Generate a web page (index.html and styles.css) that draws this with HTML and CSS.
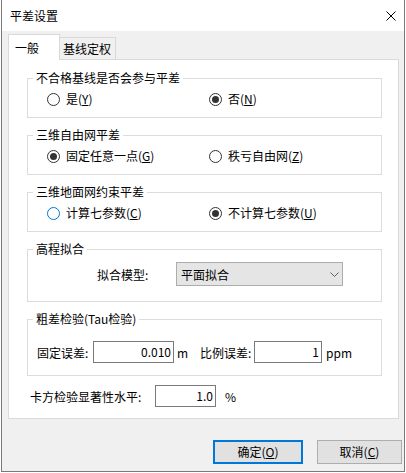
FILE: index.html
```html
<!DOCTYPE html>
<html lang="zh-CN">
<head>
<meta charset="utf-8">
<title>平差设置</title>
<link rel="stylesheet" href="styles.css">
</head>
<body>
<div class="window">
  <div class="titlebar">
    <span class="title">平差设置</span>
    <svg class="close" width="10" height="10" viewBox="0 0 10 10"><path d="M0.5 0.5 L9.5 9.5 M9.5 0.5 L0.5 9.5" stroke="#000" stroke-width="1" fill="none"/></svg>
  </div>
  <div class="client">
    <div class="tabs">
      <div class="tab active">一般</div>
      <div class="tab">基线定权</div>
    </div>
    <div class="panel">
      <fieldset class="group">
        <legend>不合格基线是否会参与平差</legend>
        <div class="opts">
          <label class="radio"><span class="mark"></span><span>是(<u>Y</u>)</span></label>
          <label class="radio"><span class="mark on"></span><span>否(<u>N</u>)</span></label>
        </div>
      </fieldset>
      <fieldset class="group">
        <legend>三维自由网平差</legend>
        <div class="opts">
          <label class="radio"><span class="mark on"></span><span>固定任意一点(<u>G</u>)</span></label>
          <label class="radio"><span class="mark"></span><span>秩亏自由网(<u>Z</u>)</span></label>
        </div>
      </fieldset>
      <fieldset class="group">
        <legend>三维地面网约束平差</legend>
        <div class="opts">
          <label class="radio"><span class="mark hover"></span><span>计算七参数(<u>C</u>)</span></label>
          <label class="radio"><span class="mark on"></span><span>不计算七参数(<u>U</u>)</span></label>
        </div>
      </fieldset>
      <fieldset class="group group-fit">
        <legend>高程拟合</legend>
        <div class="fit-row">
          <span class="fit-label">拟合模型:</span>
          <div class="combo">
            <span>平面拟合</span>
            <svg width="9" height="5" viewBox="0 0 9 5"><path d="M0.5 0.5 L4.5 4.5 L8.5 0.5" stroke="#606060" stroke-width="1" fill="none"/></svg>
          </div>
        </div>
      </fieldset>
      <fieldset class="group group-tau">
        <legend>粗差检验(Tau检验)</legend>
        <div class="tau-row">
          <span class="lbl-fixed">固定误差:</span>
          <span class="field field-fixed">0.010</span>
          <span class="unit-m">m</span>
          <span class="lbl-ratio">比例误差:</span>
          <span class="field field-ratio">1</span>
          <span class="unit-ppm">ppm</span>
        </div>
      </fieldset>
      <div class="chi-row">
        <span class="lbl-chi">卡方检验显著性水平:</span>
        <span class="field field-chi">1.0</span>
        <span class="unit-pct">%</span>
      </div>
    </div>
    <div class="buttons">
      <button class="btn btn-default">确定(<u>O</u>)</button>
      <button class="btn btn-cancel">取消(<u>C</u>)</button>
    </div>
  </div>
</div>
</body>
</html>
```

FILE: styles.css
```css
html, body {
  margin: 0;
  padding: 0;
  background: #ffffff;
}

body {
  font-family: "Noto Sans CJK SC", "Noto Sans", sans-serif;
  font-size: 12px;
  color: #000;
}

.window {
  margin-left: 1px;
  width: 404px;
  height: 472px;
  box-sizing: border-box;
  border: 1px solid #7a7a7a;
  border-top: none;
  display: flex;
  flex-direction: column;
}

.titlebar {
  height: 31px;
  flex: none;
  background: #ffffff;
  display: flex;
  align-items: center;
  justify-content: space-between;
  padding: 0 8px;
}

.title {
  line-height: 16px;
}

.close {
  display: block;
}

.client {
  flex: 1;
  background: #f0f0f0;
  padding: 3px 0 0 6px;
}

.tabs {
  display: flex;
  height: 25px;
  align-items: flex-start;
}

.tab {
  box-sizing: border-box;
  margin-top: 3px;
  height: 22px;
  width: 56px;
  border-top: 1px solid #d9d9d9;
  border-right: 1px solid #d9d9d9;
  padding-left: 3px;
  line-height: 21px;
  background: #f0f0f0;
}

.tab.active {
  margin-top: 0;
  height: 26px;
  width: 52px;
  border: 1px solid #d9d9d9;
  border-bottom: none;
  background: #ffffff;
  padding-left: 6px;
  line-height: 25px;
  position: relative;
  z-index: 1;
}

.panel {
  width: 391px;
  height: 360px;
  box-sizing: border-box;
  border: 1px solid #d9d9d9;
  background: #ffffff;
  padding: 10px 0 0 18px;
}

.group {
  margin: 0 0 9px 0;
  padding: 5px 0 10px 5px;
  border: 1px solid #dcdcdc;
  width: 355px;
  box-sizing: border-box;
  min-inline-size: 0;
}

.group legend {
  padding: 0 3px;
  line-height: 16px;
}

.opts {
  display: grid;
  grid-template-columns: 162px auto;
  padding-left: 14px;
  height: 16px;
  align-items: center;
}

.radio {
  display: flex;
  align-items: center;
  gap: 6px;
  line-height: 16px;
}

.mark {
  width: 13px;
  height: 13px;
  box-sizing: border-box;
  border: 1px solid #333333;
  border-radius: 50%;
  display: grid;
  place-items: center;
}

.mark.on::after {
  content: "";
  width: 7px;
  height: 7px;
  border-radius: 50%;
  background: #333333;
}

.mark.hover {
  border-color: #0078d7;
}

u {
  text-decoration-thickness: 1px;
  text-underline-offset: 1px;
}

.group-fit {
  padding-bottom: 15px;
}

.fit-row {
  display: flex;
  align-items: center;
  padding-left: 64px;
  height: 24px;
}

.fit-label {
  width: 79px;
}

.combo {
  width: 167px;
  height: 24px;
  box-sizing: border-box;
  background: #e5e5e5;
  border: 1px solid #adadad;
  display: flex;
  align-items: center;
  justify-content: space-between;
  padding: 0 3px 0 4px;
}

.combo svg {
  display: block;
}

.group-tau {
  padding-top: 14px;
  padding-bottom: 12px;
}

.tau-row {
  display: flex;
  align-items: center;
  height: 22px;
  padding-left: 4px;
}

.field {
  height: 22px;
  box-sizing: border-box;
  border: 1px solid #7a7a7a;
  background: #ffffff;
  text-align: right;
  padding-right: 2px;
  line-height: 20px;
}

.lbl-fixed {
  width: 56px;
}

.field-fixed {
  width: 81px;
}

.unit-m {
  width: 26px;
  box-sizing: border-box;
  padding-left: 3px;
}

.lbl-ratio {
  width: 54px;
}

.field-ratio {
  width: 68px;
}

.unit-ppm {
  padding-left: 4px;
}

.chi-row {
  display: flex;
  align-items: center;
  height: 22px;
  margin-top: 5px;
  padding-left: 3px;
}

.lbl-chi {
  width: 125px;
}

.field-chi {
  width: 61px;
}

.unit-pct {
  padding-left: 9px;
}

.buttons {
  display: flex;
  padding: 21px 0 0 205px;
  gap: 14px;
}

.btn {
  height: 24px;
  box-sizing: border-box;
  background: #e1e1e1;
  border: 1px solid #adadad;
  font-family: inherit;
  font-size: 12px;
  color: #000;
  padding: 0;
  margin: 0;
  line-height: 20px;
}

.btn-default {
  width: 90px;
  border: 2px solid #0078d7;
}

.btn-cancel {
  width: 85px;
}
```
